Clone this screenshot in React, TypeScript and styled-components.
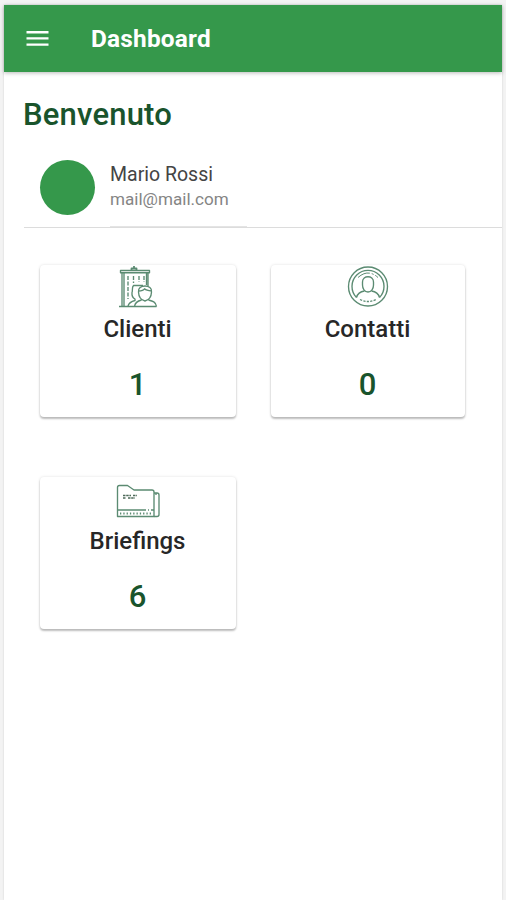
import React from 'react';
import styled, { createGlobalStyle } from 'styled-components';

const GlobalStyle = createGlobalStyle`
  *, *::before, *::after { box-sizing: border-box; }
  body {
    margin: 0;
    background: #f3f3f3;
    font-family: Roboto, "Liberation Sans", sans-serif;
  }
`;

const Frame = styled.div`
  height: 900px;
  padding: 5px 4px 0;
  overflow: hidden;
`;

const Screen = styled.div`
  height: 895px;
  background: #fff;
  box-shadow: 0 0 2px rgba(0, 0, 0, 0.14);
`;

const Toolbar = styled.header`
  display: flex;
  align-items: center;
  height: 67px;
  padding-left: 22px;
  background: #35984b;
  box-shadow: 0 1px 4px rgba(0, 0, 0, 0.28);
`;

const MenuButton = styled.button`
  display: flex;
  width: 24px;
  height: 18px;
  margin: 1px 41px 0 0;
  padding: 0;
  border: 0;
  background: none;
`;

const Title = styled.h1`
  margin: 0;
  color: #fff;
  font-size: 24.4px;
  font-weight: 700;
  letter-spacing: 0.2px;
  line-height: 28px;
`;

const Content = styled.main`
  padding: 25px 0 0 19px;
`;

const Greeting = styled.h2`
  margin: 0;
  color: #19542c;
  font-size: 31px;
  font-weight: 500;
  letter-spacing: 0.2px;
  line-height: 36px;
`;

const Profile = styled.section`
  display: flex;
  height: 95px;
  margin-left: 1px;
  padding-left: 16px;
  border-bottom: 1px solid #dcdcdc;
`;

const Avatar = styled.div`
  flex: none;
  width: 55px;
  height: 55px;
  margin-top: 27px;
  border-radius: 50%;
  background: #35984b;
`;

const Identity = styled.div`
  width: 137px;
  margin-left: 15px;
  padding-top: 28px;
  border-bottom: 1px solid #e4e4e4;
`;

const Name = styled.div`
  color: #444;
  font-size: 19.5px;
  line-height: 27px;
`;

const Email = styled.div`
  color: #858585;
  font-size: 17.1px;
  line-height: 22px;
`;

const Cards = styled.section`
  display: grid;
  grid-template-columns: 196px 194px;
  gap: 60px 35px;
  padding: 37px 0 0 17px;
`;

const Card = styled.article`
  display: flex;
  flex-direction: column;
  align-items: center;
  height: 152px;
  border-radius: 4px;
  background: #fff;
  box-shadow: 0 2px 2px rgba(0, 0, 0, 0.24), 0 0 3px rgba(0, 0, 0, 0.13);
`;

const IconSlot = styled.div`
  display: flex;
  height: 44px;
  margin-right: 1px;

  svg {
    display: block;
    fill: none;
    stroke: #5b8b72;
    stroke-width: 1.35;
    stroke-linejoin: round;
  }
`;

const Label = styled.div`
  margin: 5px 1px 0 0;
  color: #272727;
  font-size: 24px;
  font-weight: 500;
  line-height: 30px;
`;

const Count = styled.div`
  margin: 23px 1px 0 0;
  color: #19542c;
  font-size: 31px;
  font-weight: 500;
  line-height: 36px;
`;

const MenuIcon = () => (
  <svg width="24" height="18" viewBox="0 0 24 18" fill="#fff">
    <path d="M.5 1h22v2.4h-22zM.5 7.2h22v2.4h-22zM.5 13.4h22v2.4h-22z" />
  </svg>
);

const ClientsIcon = () => (
  <svg width="44" height="44" viewBox="0 0 44 44">
    <path d="M4.5 5.5h29v2.2h-29zM6 8v33M8 8v33M30.5 8v12M32 8v13M3 41.5h37.5" />
    <path d="M15.5 5V3.5h5V5M18 3.5V1" strokeWidth="1.8" />
    <path d="M12 11v23M17.5 11v7M23 11v6M28 11v6" strokeDasharray="4 1.5" />
    <path d="M27 20.5h-9.500c-2 2-.5 5-1.500 7-.4 4 1 5.500 3 6.500v1.500c-4 1-6 2-7 5.500" />
    <path d="M22.500 27c-1.500-8 14.500-8 13 0-.2 5-2.500 8-6.500 9-4-1-6.300-4-6.500-9Zm0-1c3-.2 5-.7 6-2.200 1.500 1.500 4 2 7 2.200M25.500 35c-4 1-6.500 2.500-7 6.500M32.500 35c4 1 7.500 2 8 6.500" />
  </svg>
);

const ContactsIcon = () => (
  <svg width="44" height="44" viewBox="0 0 44 44">
    <circle cx="22" cy="21.500" r="19.500" />
    <path d="M10.500 32.500a16 16 0 1 1 23 0" />
    <path d="M16.500 17c0-7 11-7 11 0v3c0 3.500-2 7-5.500 7s-5.500-3.500-5.500-7Z" />
    <path d="M10.500 32.500c1-4 4-6 8-6.500M33.500 32.500c-1-4-4-6-8-6.500" />
    <path d="M14 34.500q8 4 16 0" strokeDasharray="2.200 1.300" />
    <path d="M12 12.500q10-9 20 0" strokeWidth="1" strokeDasharray="13 2 2 2" />
  </svg>
);

const FolderIcon = () => (
  <svg width="44" height="44" viewBox="0 0 44 44">
    <path d="M1.500 39.500v-29q0-2 2-2h8l6.500 4.500h18q2 0 2 2v24.500zM1.500 33H30M32 33h1M35 33h2.500" />
    <path d="M38 16h3q2 0 2 2v19.500q0 2-2 2h-3M40 16v2" />
    <path d="M4 36.500h31" strokeWidth="1.800" strokeDasharray="1.300 2" />
    <path d="M7 18.500h8M17 18.500h4M7 21h3M12 21h7" stroke="#4d6a59" strokeDasharray="2.500 .7" />
  </svg>
);

const summaries = [
  { label: 'Clienti', count: 1, Icon: ClientsIcon },
  { label: 'Contatti', count: 0, Icon: ContactsIcon },
  { label: 'Briefings', count: 6, Icon: FolderIcon },
];

export default function App() {
  return (
    <>
      <GlobalStyle />
      <Frame>
        <Screen>
          <Toolbar>
            <MenuButton aria-label="Menu">
              <MenuIcon />
            </MenuButton>
            <Title>Dashboard</Title>
          </Toolbar>
          <Content>
            <Greeting>Benvenuto</Greeting>
            <Profile>
              <Avatar />
              <Identity>
                <Name>Mario Rossi</Name>
                <Email>mail@mail.com</Email>
              </Identity>
            </Profile>
            <Cards>
              {summaries.map(({ label, count, Icon }) => (
                <Card key={label}>
                  <IconSlot>
                    <Icon />
                  </IconSlot>
                  <Label>{label}</Label>
                  <Count>{count}</Count>
                </Card>
              ))}
            </Cards>
          </Content>
        </Screen>
      </Frame>
    </>
  );
}
